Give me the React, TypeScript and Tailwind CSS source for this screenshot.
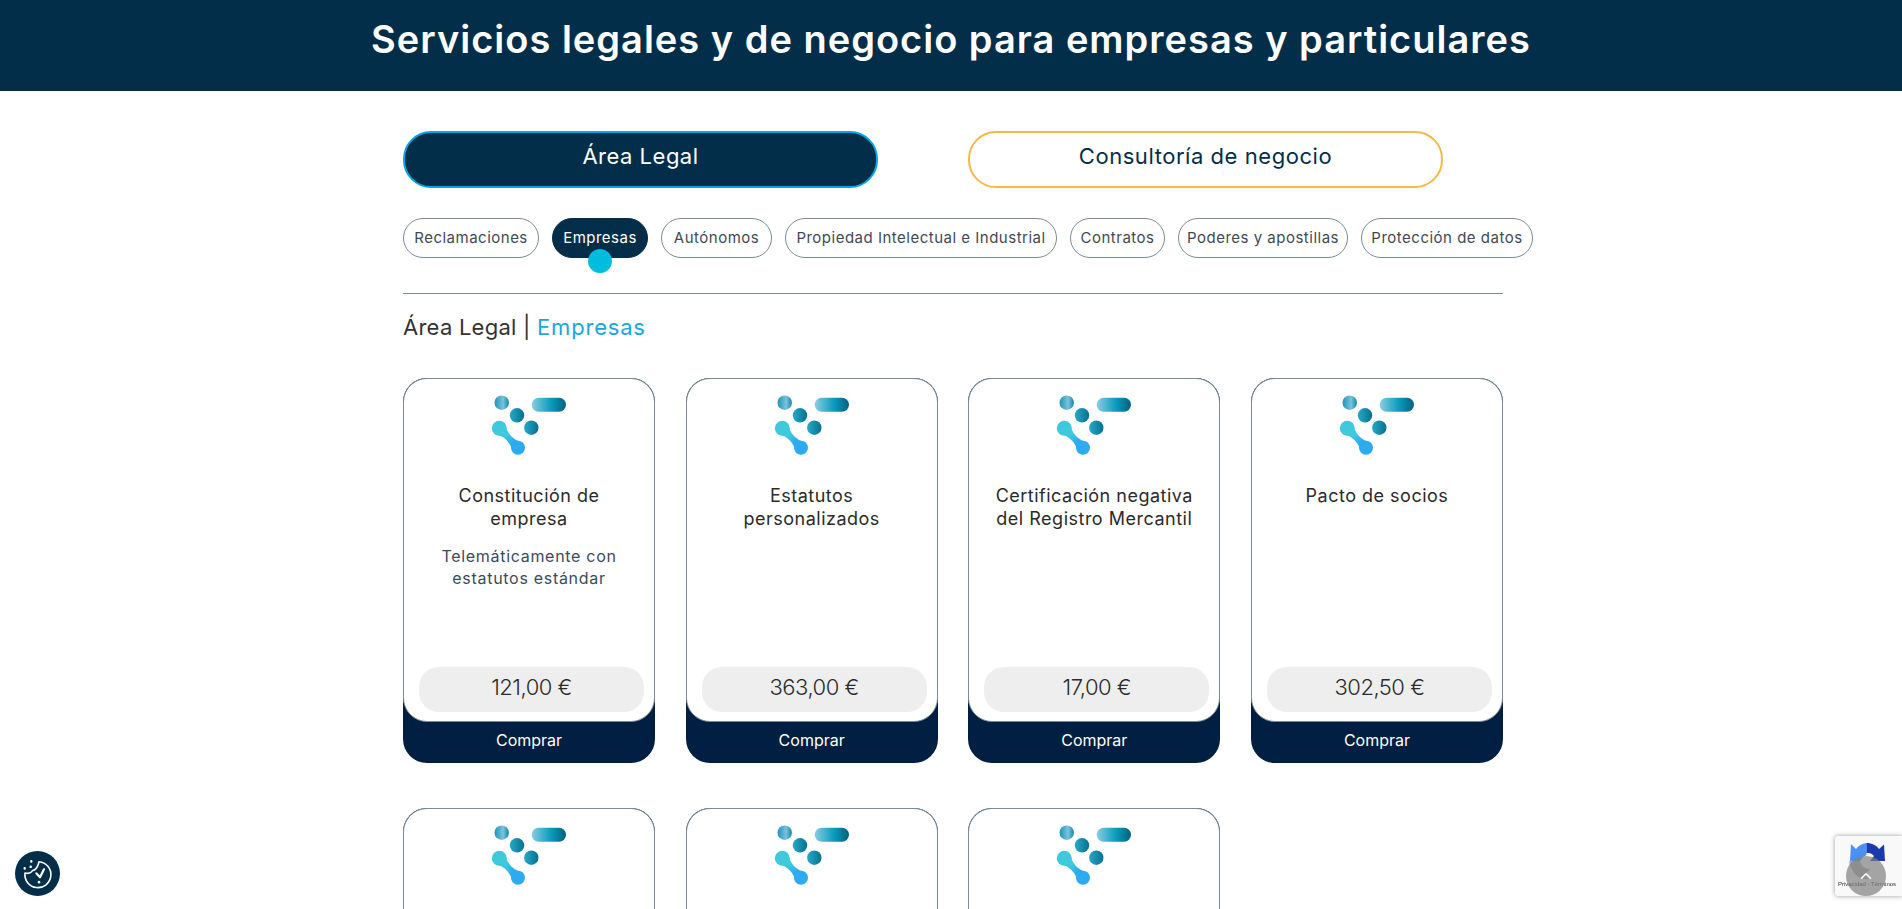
import { ChevronUp } from 'lucide-react'

const pills = [
  { label: 'Reclamaciones', width: 'w-[136px]' },
  { label: 'Empresas', width: 'w-[96px]', active: true },
  { label: 'Autónomos', width: 'w-[111px]' },
  { label: 'Propiedad Intelectual e Industrial', width: 'w-[272px]' },
  { label: 'Contratos', width: 'w-[95px]' },
  { label: 'Poderes y apostillas', width: 'w-[170px]' },
  { label: 'Protección de datos', width: 'w-[172px]' },
]

const cards = [
  { title: 'Constitución de empresa', note: 'Telemáticamente con estatutos estándar', price: '121,00 €' },
  { title: 'Estatutos personalizados', price: '363,00 €' },
  { title: 'Certificación negativa del Registro Mercantil', price: '17,00 €' },
  { title: 'Pacto de socios', price: '302,50 €' },
  { title: '', price: '' },
  { title: '', price: '' },
  { title: '', price: '' },
]

function Logo({ id }: { id: number }) {
  return (
    <svg width="80" height="60" viewBox="0 0 80 60" className="ml-[2px] shrink-0">
      <defs>
        <linearGradient id={`ball-${id}`} x1="0" x2="1" y1="0" y2="0">
          <stop offset="0" stopColor="#1a95b8" />
          <stop offset="0.6" stopColor="#7cc3dc" />
          <stop offset="1" stopColor="#1285a8" />
        </linearGradient>
        <linearGradient id={`dark-${id}`} x1="0" x2="1" y1="0" y2="0">
          <stop offset="0" stopColor="#28a9c8" />
          <stop offset="1" stopColor="#06708f" />
        </linearGradient>
        <linearGradient id={`bar-${id}`} x1="0" x2="1" y1="0" y2="0">
          <stop offset="0" stopColor="#8ccbe4" />
          <stop offset="0.55" stopColor="#0a9dbd" />
          <stop offset="1" stopColor="#04607f" />
        </linearGradient>
        <linearGradient id={`blob-${id}`} gradientUnits="userSpaceOnUse" x1="6" y1="30" x2="30" y2="55">
          <stop offset="0.4" stopColor="#3ec9dd" />
          <stop offset="0.7" stopColor="#2eaaf0" />
        </linearGradient>
      </defs>
      <circle cx="11.7" cy="7.7" r="7.2" fill={`url(#ball-${id})`} />
      <rect x="41.7" y="2.7" width="34.3" height="14" rx="7" fill={`url(#bar-${id})`} />
      <circle cx="27" cy="20.3" r="7.2" fill={`url(#dark-${id})`} />
      <circle cx="41.3" cy="32.7" r="7.2" fill={`url(#dark-${id})`} />
      <circle cx="9.3" cy="33.3" r="7.5" fill={`url(#blob-${id})`} />
      <circle cx="28" cy="52.7" r="7" fill={`url(#blob-${id})`} />
      <path d="M14.7 28.1 Q17.75 43.8 33 47.8 L23 57.6 Q19.55 42.2 3.9 38.5 Z" fill={`url(#blob-${id})`} />
    </svg>
  )
}

function ServiceCard({ card, id }: { card: (typeof cards)[number]; id: number }) {
  return (
    <div className="w-[252px] h-[385px] rounded-3xl bg-[#001f42] flex flex-col">
      <div className="h-[344px] rounded-3xl border border-[#7a8b99] bg-white flex flex-col items-center pt-4 px-[14px] pb-[9px]">
        <Logo id={id} />
        {card.title && (
          <h3 className="mt-[29px] w-[210px] text-center text-[18px] leading-[23px] text-[#2b2b2b] font-normal tracking-[0.5px]">
            {card.title}
          </h3>
        )}
        {card.note && (
          <p className="mt-[15px] w-[190px] text-center text-[16px] leading-[22px] text-[#3d4a5c] tracking-[0.7px]">{card.note}</p>
        )}
        {card.price && (
          <div className="mt-auto ml-[5px] w-[225px] h-[45px] shrink-0 rounded-[20px] bg-[#eeeeee] flex items-center justify-center pb-[4px] text-[22px] font-light tracking-[-0.5px] text-[#2b2b2b]">
            {card.price}
          </div>
        )}
      </div>
      {card.price && <div className="flex-1 flex items-center justify-center pb-[5px] text-white text-[16px]">Comprar</div>}
    </div>
  )
}

export default function App() {
  return (
    <div className="h-screen overflow-hidden bg-white font-['Inter','Liberation_Sans',sans-serif]">
      <header className="h-[91px] bg-[#032e4a] flex items-center justify-center pb-[12px]">
        <h1 className="text-[38px] font-semibold text-white tracking-[1px]">
          Servicios legales y de negocio para empresas y particulares
        </h1>
      </header>

      <main className="w-[1100px] ml-[403px] pt-[40px]">
        <div className="flex gap-[90px]">
          <button className="w-[475px] h-[57px] rounded-[28px] border-2 border-[#06a5e5] bg-[#032e4a] text-white text-[22px] tracking-[0.5px] pb-[6px]">
            Área Legal
          </button>
          <button className="w-[475px] h-[57px] rounded-[28px] border-2 border-[#f5b945] bg-white text-[#032e4a] text-[22px] tracking-[0.55px] pb-[6px]">
            Consultoría de negocio
          </button>
        </div>

        <div className="mt-[30px] flex gap-[13px] w-[1129px]">
          {pills.map((pill) => (
            <button
              key={pill.label}
              className={`relative h-10 shrink-0 rounded-[20px] border whitespace-nowrap flex items-center justify-center text-[15px] tracking-[0.5px] ${pill.width} ${
                pill.active ? 'bg-[#032e4a] border-[#032e4a] text-white' : 'bg-white border-[#7a8b99] text-[#3f4a55]'
              }`}
            >
              {pill.label}
              {pill.active && <span className="absolute left-1/2 -translate-x-1/2 top-[30px] w-6 h-6 rounded-full bg-[#00bcdd]" />}
            </button>
          ))}
        </div>

        <hr className="mt-[35px] border-0 h-px bg-[#7a8b99]" />

        <p className="mt-[19px] text-[22px] leading-[28px] tracking-[0.25px] text-[#333333]">
          Área Legal | <span className="text-[#1ba5e0] tracking-[0.8px]">Empresas</span>
        </p>

        <div className="mt-[37px] flex justify-between w-[1100px]">
          {cards.slice(0, 4).map((card, i) => (
            <ServiceCard key={i} card={card} id={i} />
          ))}
        </div>
        <div className="mt-[45px] flex gap-[30.67px]">
          {cards.slice(4).map((card, i) => (
            <ServiceCard key={i} card={card} id={i + 4} />
          ))}
        </div>
      </main>

      {/* cookie preferences */}
      <button className="fixed left-[15px] bottom-[13px] w-[45px] h-[45px] rounded-full bg-[#032e4a] flex items-center justify-center">
        <svg width="32" height="32" viewBox="0 0 32 32" fill="none" stroke="white" strokeWidth="1.6" strokeLinecap="round" strokeLinejoin="round">
          <path d="M17 3.7 A13 13 0 1 1 3 15 C6 16 9.5 15 10.5 12.5 C13.5 12.5 16.5 8 17 3.7" />
          <path d="M14.3 15.3 L18 19.3 L22 11.3" strokeWidth="2.2" />
          <path d="M17 24 L17 24.3" strokeWidth="2.6" />
          <path d="M9.3 3.3 L9.3 3.5 M2.7 10.3 L2.7 10.5 M8.7 8.7 L8.7 8.9" strokeWidth="2.4" />
        </svg>
      </button>

      {/* recaptcha badge */}
      <div className="fixed right-0 bottom-[13px] w-[67px] h-[60px] rounded-l-[3px] bg-[#f9f9f9] shadow-[0_0_5px_rgba(128,128,128,0.8)] flex flex-col items-center pt-[6px] pr-[3px]">
        <svg width="38" height="38" viewBox="0 0 38 38" className="shrink-0">
          <path d="M3 2 L8 7 C10.5 4 14 1.5 18.5 1 L18.5 13 L15 15 L12 19 L2 19 Z" fill="#4a90f5" />
          <path d="M18.5 1 C24 1 28.5 3.5 31 7 L36 2.5 L37 19 L22 19 L26 14 C24 11.5 22 11 18.5 11 Z" fill="#1c3aa9" />
          <path d="M1 19 L12 19 C13 24 17 27 22 27 L17 33 L21 37 C10 38 3 30 1 19 Z" fill="#b0b0b0" />
        </svg>
        <span className="font-['Liberation_Sans',sans-serif] text-[6px] leading-[8px] text-[#333333] whitespace-nowrap">Privacidad - Términos</span>
      </div>

      {/* back to top */}
      <button className="fixed right-[16px] bottom-[13px] w-10 h-10 rounded-full bg-[#808080]/70 flex items-center justify-center text-white">
        <ChevronUp size={18} />
      </button>
    </div>
  )
}
